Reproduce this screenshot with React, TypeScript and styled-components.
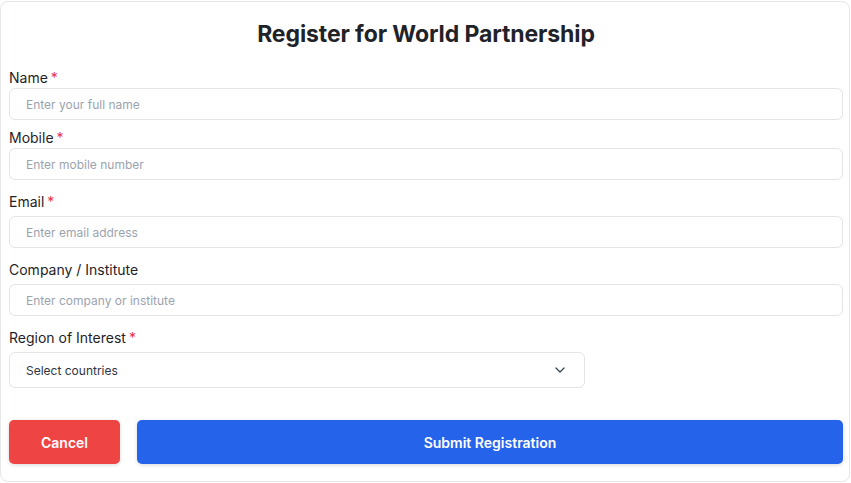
import React, { FC } from 'react';
import styled, { createGlobalStyle } from 'styled-components';
import { ChevronDown } from 'lucide-react';

const GlobalStyle = createGlobalStyle`
  html, body {
    margin: 0;
    padding: 0;
    background: #ffffff;
  }
  body {
    font-family: Inter, "Noto Sans", sans-serif;
    color: #1f2937;
  }
  * {
    box-sizing: border-box;
  }
`;

const Card = styled.form`
  margin: 1px 1px 0 0;
  width: 850px;
  height: 481px;
  padding: 8px 6px 8px 8px;
  border: 1px solid #e5e7eb;
  border-radius: 8px;
  background: #ffffff;
  display: flex;
  flex-direction: column;
`;

const Title = styled.h2`
  margin: 0 0 10px;
  height: 48px;
  line-height: 48px;
  text-align: center;
  font-size: 23px;
  font-weight: 700;
  color: #1f2328;
  letter-spacing: -0.1px;
`;

const Field = styled.div<{ $gap: number; $after: number }>`
  display: flex;
  flex-direction: column;
  gap: ${p => p.$gap}px;
  margin-bottom: ${p => p.$after}px;
`;

const Label = styled.label`
  height: 20px;
  line-height: 20px;
  font-size: 14px;
  font-weight: 400;
  color: #1f2328;
`;

const Star = styled.span`
  color: #e8334a;
  margin-left: 3px;
`;

const Input = styled.input`
  width: 100%;
  height: 32px;
  padding: 0 16px;
  border: 1px solid #e2e4e9;
  border-radius: 6px;
  font-family: inherit;
  font-size: 12px;
  color: #374151;
  outline: none;
  &::placeholder {
    color: #9ca3af;
  }
`;

const Select = styled.div`
  width: 576px;
  height: 36px;
  padding: 0 16px 0 16px;
  border: 1px solid #e2e4e9;
  border-radius: 6px;
  display: flex;
  align-items: center;
  justify-content: space-between;
  font-size: 12px;
  color: #2f3540;
`;

const Actions = styled.div`
  display: flex;
  gap: 17px;
  margin-top: 32px;
`;

const Button = styled.button<{ $variant: 'cancel' | 'submit' }>`
  height: 44px;
  border: none;
  border-radius: 5px;
  font-family: inherit;
  font-size: 14px;
  font-weight: 600;
  color: #ffffff;
  cursor: pointer;
  width: ${p => (p.$variant === 'cancel' ? '111px' : 'auto')};
  flex: ${p => (p.$variant === 'cancel' ? '0 0 auto' : '1')};
  background: ${p => (p.$variant === 'cancel' ? '#ef4444' : '#2563eb')};
  box-shadow: 0 1px 4px rgba(0, 0, 0, 0.15);
`;

type FieldDef = {
  label: string;
  placeholder: string;
  required: boolean;
  gap: number;
  after: number;
};

const fields: FieldDef[] = [
  { label: 'Name', placeholder: 'Enter your full name', required: true, gap: 0, after: 8 },
  { label: 'Mobile', placeholder: 'Enter mobile number', required: true, gap: 0, after: 12 },
  { label: 'Email', placeholder: 'Enter email address', required: true, gap: 4, after: 12 },
  { label: 'Company / Institute', placeholder: 'Enter company or institute', required: false, gap: 4, after: 12 },
];

const App: FC = () => {
  return (
    <>
      <GlobalStyle />
      <Card onSubmit={e => e.preventDefault()}>
        <Title>Register for World Partnership</Title>
        {fields.map(f => (
          <Field key={f.label} $gap={f.gap} $after={f.after}>
            <Label>
              {f.label}
              {f.required && <Star>*</Star>}
            </Label>
            <Input type="text" placeholder={f.placeholder} />
          </Field>
        ))}
        <Field $gap={4} $after={0}>
          <Label>
            Region of Interest<Star>*</Star>
          </Label>
          <Select>
            <span>Select countries</span>
            <ChevronDown size={16} strokeWidth={1.8} color="#374151" />
          </Select>
        </Field>
        <Actions>
          <Button type="button" $variant="cancel">Cancel</Button>
          <Button type="submit" $variant="submit">Submit Registration</Button>
        </Actions>
      </Card>
    </>
  );
};

export default App;
